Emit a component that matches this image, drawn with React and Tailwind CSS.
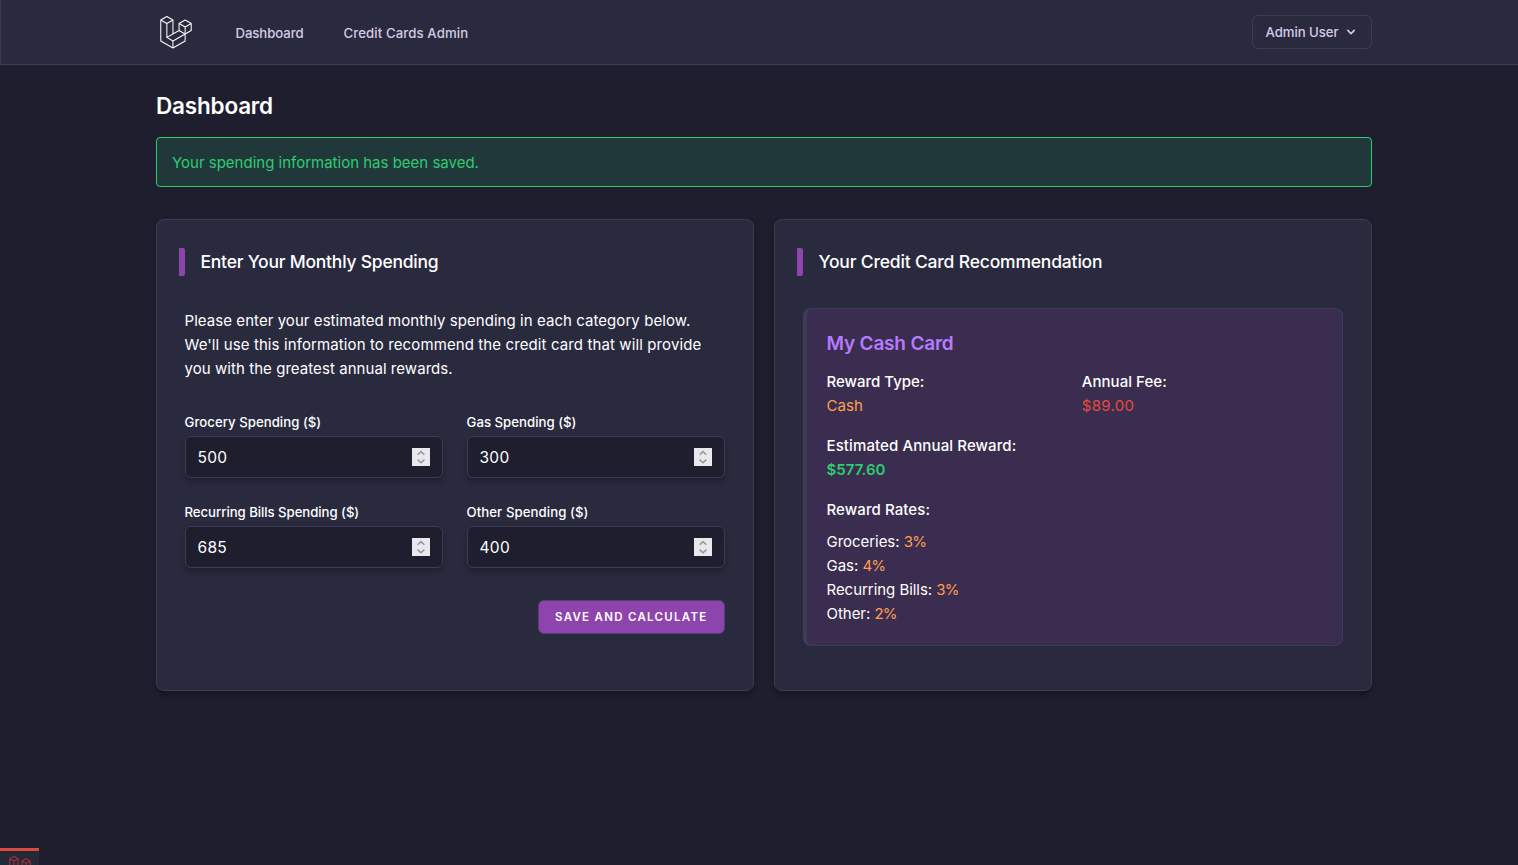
function LaravelMark({ className, strokeWidth }) {
  return (
    <svg viewBox="0 0 62 65" fill="none" stroke="currentColor" strokeWidth={strokeWidth} strokeLinejoin="round" strokeLinecap="round" className={className}>
      <path d="M1 7.9 13 1l12 6.9-12 6.9zM1 7.9V49.3l24 13.8 24-13.8V35.5M13 14.8v27.4l12 7v13.9M25 7.9v27.4M13 42.2l24-13.7 12 7-24 13.7M37 14.9l12-6.9 12 6.9-12 6.8zM37 14.9v13.6M49 21.7v13.8l12-7V14.9" />
    </svg>
  );
}

function Card({ title, titleClass, children }) {
  return (
    <section className="flex h-[472px] w-[598px] flex-col rounded-lg border border-[#3b3b54] bg-[#2a2a3f] px-7 shadow-[0_4px_6px_rgba(0,0,0,0.3)]">
      <div className="-ml-1.5 mt-7 flex h-7 items-center gap-[15.5px]">
        <span className="h-7 w-1.5 rounded-r-[2px] bg-[#8e44ad]" />
        <h2 className={`whitespace-nowrap text-[17.5px] font-medium ${titleClass}`}>{title}</h2>
      </div>
      {children}
    </section>
  );
}

function Field({ label, value, labelClass }) {
  return (
    <label className="flex flex-col">
      <span className={`-ml-[0.5px] h-5 whitespace-nowrap text-[13.2px] font-medium leading-5 ${labelClass}`}>{label}</span>
      <span className="mt-1 flex h-[42px] items-center justify-between rounded-md border border-[#3b3b54] bg-[#1e1e2e] px-3 shadow-[0_4px_6px_rgba(0,0,0,0.25)]">
        <span className="-ml-[0.5px] pt-px text-[15.5px] tracking-[0.3px]">{value}</span>
        <svg viewBox="0 0 18 18" className="size-[18px] bg-[#e9e9ed]" fill="none" stroke="#96969b" strokeWidth="1.5">
          <path d="M5.6 6.7 9 3.6l3.4 3.1M5.6 11.6 9 14.7l3.4-3.1" />
        </svg>
      </span>
    </label>
  );
}

const fields = [
  { label: "Grocery Spending ($)", value: "500", labelClass: "tracking-[0.03px]" },
  { label: "Gas Spending ($)", value: "300", labelClass: "tracking-[0.02px]" },
  { label: "Recurring Bills Spending ($)", value: "685", labelClass: "tracking-[-0.05px]" },
  { label: "Other Spending ($)", value: "400", labelClass: "tracking-[0.08px]" },
];

const rates = [
  { name: "Groceries:", rate: "3%" },
  { name: "Gas:", rate: "4%" },
  { name: "Recurring Bills:", rate: "3%" },
  { name: "Other:", rate: "2%" },
];

export default function App() {
  return (
    <div className="flex h-[865px] flex-col overflow-hidden bg-[#1e1e2e] font-['Inter',sans-serif] text-[15px] leading-6 text-white">
      <nav className="h-[65px] shrink-0 border-b border-l border-[#3b3b54] bg-[#2a2a3f]">
        <div className="ml-[155px] flex h-16 w-[1216px] items-center text-[13.2px] font-medium text-[#d4cce6]">
          <LaravelMark strokeWidth="2" className="ml-1 h-[33px] w-8 text-white" />
          <a className="ml-[43.5px] mt-0.5 tracking-[-0.09px]">Dashboard</a>
          <a className="ml-10 mt-0.5 tracking-[0.1px]">Credit Cards Admin</a>
          <button className="ml-auto flex h-[34px] w-[120px] items-center rounded-md border border-[#3b3b54] pl-[12.5px]">
            <span className="whitespace-nowrap tracking-[-0.06px]">Admin User</span>
            <svg viewBox="0 0 20 20" fill="currentColor" className="ml-[4.5px] size-4">
              <path fillRule="evenodd" clipRule="evenodd" d="M5.293 7.293a1 1 0 011.414 0L10 10.586l3.293-3.293a1 1 0 111.414 1.414l-4 4a1 1 0 01-1.414 0l-4-4a1 1 0 010-1.414z" />
            </svg>
          </button>
        </div>
      </nav>

      <main className="ml-[156px] flex w-[1216px] flex-1 flex-col">
        <h1 className="mt-[25px] h-8 text-[22.5px] font-semibold leading-8 tracking-[-0.19px]">Dashboard</h1>
        <div className="mt-[15px] flex h-[50px] items-center rounded border border-[#2ecc71] bg-[#21383b] px-[15px] pt-0.5 text-[#2ecc71]">
          Your spending information has been saved.
        </div>

        <div className="mt-8 flex gap-5">
          <Card title="Enter Your Monthly Spending" titleClass="tracking-[-0.23px]">
            <p className="-ml-[0.5px] mt-[33px] whitespace-nowrap">
              <span className="block tracking-[0.06px]">Please enter your estimated monthly spending in each category below.</span>
              <span className="block tracking-[0.11px]">We'll use this information to recommend the credit card that will provide</span>
              <span className="block tracking-[0.06px]">you with the greatest annual rewards.</span>
            </p>
            <div className="mt-[31px] grid grid-cols-2 gap-6">
              {fields.map((f) => (
                <Field key={f.label} {...f} />
              ))}
            </div>
            <button className="mt-8 flex h-[34px] w-[187px] items-center self-end whitespace-nowrap rounded-md border border-[#5b3a7c] bg-[#8e44ad] pl-4 text-[11.5px] font-semibold tracking-[1.28px]">
              SAVE AND CALCULATE
            </button>
          </Card>

          <Card title="Your Credit Card Recommendation" titleClass="tracking-[-0.18px]">
            <div className="mt-8 h-[338px] w-[540px] rounded-lg border border-l-4 border-[#3f3b5a] bg-[#3a2d4f] pl-[19.5px] pr-5 pt-[21px]">
              <h3 className="h-7 text-[19px] font-semibold leading-7 tracking-[-0.19px] text-[#b57bff]">My Cash Card</h3>
              <div className="mt-3 grid grid-cols-2 gap-4">
                <div>
                  <p className="font-medium">Reward Type:</p>
                  <p className="tracking-[0.08px] text-[#ff9f55]">Cash</p>
                </div>
                <div className="-ml-[0.5px]">
                  <p className="font-medium tracking-[0.05px]">Annual Fee:</p>
                  <p className="tracking-[0.3px] text-[#e74c3c]">$89.00</p>
                </div>
                <div className="col-span-2">
                  <p className="font-medium tracking-[0.11px]">Estimated Annual Reward:</p>
                  <p className="font-semibold tracking-[0.04px] text-[#2ecc71]">$577.60</p>
                </div>
              </div>
              <p className="mt-4 font-medium tracking-[0.09px]">Reward Rates:</p>
              <ul className="mt-2">
                {rates.map((r) => (
                  <li key={r.name} className="tracking-[-0.04px]">
                    {r.name} <span className="tracking-[-0.8px] text-[#ff9f55]">{r.rate}</span>
                  </li>
                ))}
              </ul>
            </div>
          </Card>
        </div>
      </main>

      <div className="h-[17px] w-[39px] shrink-0 overflow-hidden border-t-[3px] border-[#dc4a3d] bg-[#242a35]">
        <LaravelMark strokeWidth="3" className="ml-[9px] mt-[5px] h-[22px] w-[22px] text-[#b32f38]" />
      </div>
    </div>
  );
}
